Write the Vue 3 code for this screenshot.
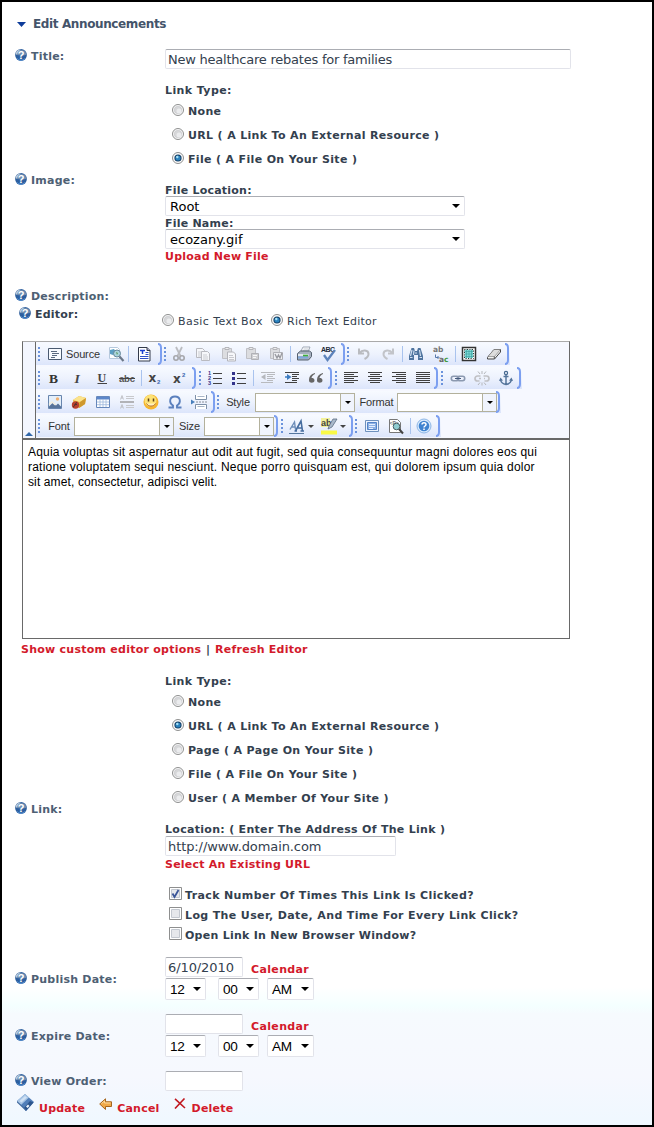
<script setup>
import { h } from 'vue'

const HelpIcon = () =>
  h('svg', {
    width: 12, height: 12, viewBox: '0 0 12 12', style: 'display:block;flex:none',
    innerHTML: `<circle cx="6" cy="6" r="5.900" fill="#2d5f9f"/><path d="M.3 5.800A5.800 5.800 0 0 1 11.700 5.800C9 7 4 6.600.3 5.800Z" fill="#6d8cb0"/><path d="M.6 5A5.500 5.500 0 0 1 6 .4C4 1.500 2.500 3 2 5.500Z" fill="#b9c9da"/><path d="M2 9.500C4 11.800 8 11.800 10 9.500" stroke="#5b95d6" fill="none"/><text x="6" y="9.800" text-anchor="middle" font-family="Liberation Sans" font-weight="bold" font-size="11" fill="#fff">?</text>`
  })

const RadioDot = (props) =>
  h('svg', {
    width: 12, height: 12, viewBox: '0 0 12 12', style: 'display:block;flex:none',
    innerHTML: `<circle cx="6" cy="6" r="5.500" fill="#fafafa" stroke="#8e8f8f"/>` +
      (props.on
        ? `<circle cx="6" cy="6" r="3.600" fill="#123a60"/><circle cx="6" cy="6" r="2.600" fill="#2b82bd"/><circle cx="5.300" cy="5" r="1.200" fill="#a5e0f5"/>`
        : `<circle cx="6" cy="6" r="3.800" fill="#d6d7d9" stroke="#c4c5c7" stroke-width=".6"/><circle cx="7" cy="7" r="2.500" fill="#ebecee"/>`)
  })
RadioDot.props = { on: Boolean }

const sheet = (x, y, c) => `<path d="M${x} ${y}h6l2 2v7h-8z" fill="#f6f7fa" stroke="${c}"/><path d="M${x + 1.5} ${y + 3.5}h4M${x + 1.5} ${y + 5.5}h5M${x + 1.5} ${y + 7.5}h5" stroke="${c}" stroke-width=".7"/>`
const clip = `<path d="M2.500 2.500h9v10h-9z" fill="#dcdde0" stroke="#c0c1c6"/><path d="M5 1.500h4v2h-4z" fill="#eee" stroke="#b4b5ba"/>`
const lines = (list, c = '#404040') => list.map(([x, y, w]) => `<path d="M${x} ${y + .5}h${w}" stroke="${c}"/>`).join('')
const serif = 'font-family="Liberation Serif" font-weight="bold"'
const sans = 'font-family="Liberation Sans" font-weight="bold"'
const wideSans = 'font-family="DejaVu Sans" font-weight="bold"'

const art = {
  source: `<path d="M1.500 2.500h13v11h-13z" fill="#f8fbff" stroke="#4a5a70"/><path d="M4 5.500h6M5 7.500h7M5 9.500h5M4 11.500h4" stroke="#5a6a80"/>`,
  preview: `<path d="M1.500 1.500h8l2 2v9h-10z" fill="#fff" stroke="#b5c8dc"/><path d="M2 4l4-1 2 3-3 3-3-1z" fill="#5b9fc4"/><circle cx="9" cy="7.500" r="3.500" fill="#a9d4dc" stroke="#66879b"/><path d="M8 6l2 1-1 2z" fill="#5c985c"/><path d="M11.500 10.500l4 4.500" stroke="#6b7788" stroke-width="2.200"/>`,
  template: `<path d="M2.500 1.500h8.500l3 3v10.500h-11.500z" fill="#fff" stroke="#333a4a"/><path d="M11 1.500v3h3" fill="#aac" stroke="#333a4a"/><path d="M4 4.500h5M6.500 4v4" stroke="#1b3fd0" stroke-width="1.500"/><path d="M9.500 6.500h3M9.500 8.500h3M4 10.500h8.500M4 12.500h8.500" stroke="#3050c8"/>`,
  cut: `<path d="M5 1l4.500 9M11 1l-4.500 9" stroke="#bbbcc0" stroke-width="1.800"/><circle cx="5" cy="12" r="2.200" fill="none" stroke="#a5a6aa" stroke-width="1.600"/><circle cx="11" cy="12" r="2.200" fill="none" stroke="#a5a6aa" stroke-width="1.600"/>`,
  copy: sheet(1.5, 2.5, '#b9bac0') + sheet(6.5, 5.5, '#b9bac0'),
  paste: clip + sheet(7.5, 6, '#b4b5bb'),
  pastetext: clip + `<path d="M7.500 7.500h7v6h-7z" fill="#cfd0d4" stroke="#b0b1b6"/><path d="M9 9.500h4M9 11.500h3" stroke="#f7f7f7"/>`,
  pasteword: clip + `<path d="M5.500 6.500h9v7h-9z" fill="#eeeff2" stroke="#b0b1b6"/><path d="M7 8l2 4 1.500-3 1.500 3 2-5" stroke="#999aa0" fill="none" stroke-width="1.300"/>`,
  print: `<path d="M5 5l2-4h7l-2 5z" fill="#fff" stroke="#8b95a5" stroke-width=".8"/><path d="M7.500 3h5M7 4.500h5" stroke="#98a5b5" stroke-width=".6"/><path d="M1.500 7.500l3-2.500h9l2 1.500v4l-3 3.500h-11z" fill="#a6b0bf" stroke="#55606f"/><path d="M2 8h10.500v2h-10.500z" fill="#e4e9ef"/><path d="M2 11.500h10" stroke="#7fa9dc" stroke-width="2"/><path d="M7 9.500h5" stroke="#3fae3b" stroke-width="1.600"/>`,
  spell: `<text x="0" y="5.800" font-family="Liberation Sans" font-size="7" fill="#222a38" textLength="14">ABC</text><path d="M3 9l3.500 5L14 4" stroke="#5d83bb" stroke-width="2.300" fill="none"/>`,
  undo: `<path d="M3 2.500v5h5M3.500 7C6 3.500 12.500 3.500 12.500 8c0 2.500-2 4-4 5" stroke="#b9bbc0" stroke-width="2" fill="none"/>`,
  redo: `<path d="M13 2.500v5h-5M12.500 7C10 3.500 3.500 3.500 3.500 8c0 2.500 2 4 4 5" stroke="#c2c4c9" stroke-width="2" fill="none"/>`,
  find: `<path d="M3.500 2h2.500l1 3h2l1-3h2.500l2.500 8v4h-5v-5h-4v5h-5v-4z" fill="#4f749f"/><path d="M4 4l-1.500 6M6 4.500L5.500 9M11.500 4l1 6M2 11.500h2.500M11.500 11.500h2.500M7 7h2" stroke="#cfdef0" stroke-width="1.200"/>`,
  replace: `<text x="0" y="6" ${wideSans} font-size="7.500" fill="#777">ab</text><text x="6" y="15.500" ${wideSans} font-size="7.500" fill="#666">a<tspan fill="#3c9a3c">c</tspan></text><path d="M2.500 8.500v3h3M4.500 10l1.500 1.500-1.500 1.500" stroke="#5577aa" fill="none"/>`,
  selectall: `<path d="M1.500 1.500h13v13h-13z" fill="#fff" stroke="#333" stroke-width="1.500"/><path d="M4 4h8v8h-8z" fill="#7fdcd8"/><path d="M5.500 3v10M8 3v10M10.500 3v10M3 5.500h10M3 8h10M3 10.500h10" stroke="#3a9a9c" stroke-width=".6"/><path d="M3.500 3.500h9v9h-9z" fill="none" stroke="#333" stroke-dasharray="1 1.500"/>`,
  eraser: `<path d="M1.500 11.500L8 3.500h6.500v2.500L8.500 13h-7z" fill="#f1f1f1" stroke="#444"/><path d="M8 3.500h6.500L8.500 10.500H2z" fill="#ddd" stroke="#777" stroke-width=".6"/><path d="M8.300 10.500V13" stroke="#555"/>`,
  bold: `<text x="3" y="12.500" ${serif} font-size="13.500" fill="#333">B</text>`,
  italic: `<text x="4.500" y="12.500" ${serif} font-style="italic" font-size="13.500" fill="#444">I</text>`,
  underline: `<text x="3.500" y="11.500" ${serif} font-size="12" fill="#444">U</text><path d="M3.500 13.500h9.500" stroke="#444"/>`,
  strike: `<text x="0" y="12" ${sans} font-size="9.500" fill="#555" textLength="16">abc</text><path d="M0 8.500h16" stroke="#444"/>`,
  sub: `<text x="1.500" y="11.500" ${wideSans} font-size="12" fill="#444">x</text><text x="10" y="14" ${sans} font-size="6" fill="#3a66b0">2</text>`,
  sup: `<text x="1" y="12.500" ${wideSans} font-size="12" fill="#444">x</text><text x="10" y="6.500" ${sans} font-size="6" fill="#3a66b0">2</text>`,
  num: lines([[6, 3, 9], [6, 8, 9], [6, 13, 9]]) + [5, 10, 15].map((y, i) => `<text x="1" y="${y}" ${sans} font-size="5.500" fill="#33338c">${i + 1}</text>`).join(''),
  bul: lines([[6, 3, 9], [6, 8, 9], [6, 13, 9]]) + [2, 7, 12].map(y => `<path d="M1 ${y}h3v3h-3z" fill="#33338c"/>`).join(''),
  outdent: lines([[1, 2, 14], [7, 4, 8], [7, 6, 6], [7, 8, 8], [7, 10, 6], [1, 12, 12]], '#b8babe') + `<path d="M5.500 4v6L1 7z" fill="#b5b8bd"/>`,
  indent: lines([[1, 2, 14], [8, 4, 7], [8, 6, 5], [8, 8, 7], [8, 10, 5], [1, 12, 12]]) + `<path d="M3 4v6l4.500-3z" fill="#3c7cc0"/><path d="M1 7h3" stroke="#3c7cc0" stroke-width="1.500"/>`,
  quote: `<path d="M7 3C3 4 1 6 1 10.500c0 3 5.500 3 5.500 0 0-2-1.500-2.500-3-2.500.3-2 1.500-3 3.500-4zM15 3c-4 1-6 3-6 7.500 0 3 5.500 3 5.500 0 0-2-1.500-2.500-3-2.500.3-2 1.500-3 3.500-4z" fill="#666"/>`,
  left: lines([[1, 2, 14], [1, 4, 10], [1, 6, 14], [1, 8, 10], [1, 10, 14], [1, 12, 10]]),
  center: lines([[1, 2, 14], [3, 4, 10], [1, 6, 14], [3, 8, 10], [1, 10, 14], [3, 12, 10]]),
  right: lines([[1, 2, 14], [5, 4, 10], [1, 6, 14], [5, 8, 10], [1, 10, 14], [5, 12, 10]]),
  justify: lines([[1, 2, 14], [1, 4, 14], [1, 6, 14], [1, 8, 14], [1, 10, 14], [1, 12, 14]]),
  chain: `<rect x="1.300" y="6.300" width="7.500" height="4.400" rx="2.200" fill="none" stroke="#8b99b0" stroke-width="1.600"/><rect x="7.200" y="6.300" width="7.500" height="4.400" rx="2.200" fill="none" stroke="#8b99b0" stroke-width="1.600"/><path d="M5 8.500h6" stroke="#45597b"/>`,
  unchain: `<path d="M6.500 6H3.500a2.500 2.500 0 0 0 0 5h2M9.500 6h3a2.500 2.500 0 0 1 0 5h-2M7 8.500h-2M11 8.500h-1" stroke="#c0c1c5" stroke-width="1.700" fill="none"/><path d="M8 1v3M4 1.500l2 2.500M12 1.500l-2 2.500M8 12.500v3M4 15l2-2.500M12 15l-2-2.500" stroke="#b5b7bb"/>`,
  anchor: `<circle cx="8" cy="3" r="1.600" fill="none" stroke="#45688f" stroke-width="1.200"/><path d="M8 4.500v10M5.500 6.500h5M2.500 9.500c.5 3 2.500 4.500 5.500 5 3-.5 5-2 5.500-5" stroke="#55759b" stroke-width="1.500" fill="none"/><path d="M1 11l1.500-3.500L5 10.500zM15 11l-1.500-3.500L11 10.500z" fill="#55759b"/>`,
  image: `<path d="M1.500 1.500h13v13h-13z" fill="#e4effa" stroke="#6785ad"/><path d="M2 12.500l4-4 3 3 2-2 3 3v1.500h-12z" fill="#58749a"/><path d="M2 10.500l3-2.500 3.500 3" stroke="#f4efdf" stroke-width="1.500" fill="none"/><circle cx="10.500" cy="5" r="1.700" fill="#f0b070"/>`,
  flash: `<path d="M2 6l6-4 7 2-1 6-6 4-5-3z" fill="#e8b93d"/><path d="M2 6l6-4 7 2-6 4z" fill="#fbe38d"/><path d="M9 8l6-4-1 6-6 4z" fill="#cf982d"/><circle cx="4.500" cy="11" r="3.700" fill="#b8402c"/><path d="M6 8.500c-2 0-1.500 4-4 4.500M3.500 10.500h2.500" stroke="#50302c" fill="none"/>`,
  table: `<path d="M1.500 2.500h13v11h-13z" fill="#fff" stroke="#6688bb"/><path d="M2 3h12v2.500h-12z" fill="#5c87ca"/><path d="M2 8h12M2 10.700h12M5 5v8M8 5v8M11 5v8" stroke="#9db7dc" stroke-width=".8"/>`,
  hr: `<path d="M1 8h14" stroke="#b2b3b7" stroke-width="2"/><path d="M7 2.500h8M7 4.500h8M7 11.500h8M7 13.500h8" stroke="#c8c9cc"/><path d="M1.500 5.500l1.500-4 1.500 4M2 4h2M1.500 14.500l1.500-4 1.500 4M2 13h2" stroke="#b8b9bd" stroke-width=".8" fill="none"/>`,
  smiley: `<circle cx="8" cy="8" r="7.500" fill="#f6b52e"/><circle cx="7.500" cy="6.800" r="6" fill="#fde275"/><path d="M5.500 4.500v3M10.500 4.500v3" stroke="#60401a" stroke-width="1.500"/><path d="M3.500 9.500c2 3.500 7 3.500 9 0" stroke="#b5651f" fill="#fff3c0" stroke-width="1"/>`,
  omega: `<path d="M1.500 13.500h4.500v-2C1.500 8.500 2.500 2.500 8 2.500s6.500 6 2 9v2h4.500" stroke="#5b80bd" stroke-width="1.900" fill="none"/>`,
  pagebreak: `<path d="M4.500 1v4.500h11V1M4.500 15v-4.500h11V15" stroke="#7d90a8" fill="#fff"/><path d="M6.500 2.500h7M6.500 12.500h7" stroke="#a7b5c8"/><path d="M5 8h11" stroke="#888e98" stroke-dasharray="2 1"/><path d="M0 5.500L4 8l-4 2.500z" fill="#4a80bc"/>`,
  textcolor: `<path d="M1 11.500L5.500 4l1 7.500M3 9h3.500" stroke="#6d8db8" stroke-width="1.400" fill="none"/><path d="M6.500 13L12 3l1.500 10M9 10h4M5.500 13h2.500M11.500 13h3.500" stroke="#456c9f" stroke-width="1.600" fill="none"/><path d="M0 15.500h15" stroke="#56779f"/>`,
  bgcolor: `<path d="M0 0h9v9h-9z" fill="#f2f19a"/><text x="0" y="7.500" ${sans} font-size="9" fill="#444">ab</text><path d="M8 8l4-7h4l-5 8-4 2z" fill="#a9b9cb" stroke="#5e6f83" stroke-width=".8"/><path d="M0 12.500h16v4h-16z" fill="#f9f946"/>`,
  blocks: `<path d="M1.500 2.500h13v11h-13z" fill="#edf4fe" stroke="#6e91bd"/><path d="M3.500 4.500h9v7h-9z" fill="#8eb2e4" stroke="#5484c8"/><path d="M5 6.500h6M5 8.500h6M5 10.500h4" stroke="#e3efff"/>`,
  tagpreview: `<path d="M1.500 1.500h8l3 3v10h-11z" fill="#fff" stroke="#777"/><text x="1.500" y="6.500" ${sans} font-size="5" fill="#777">&lt;P&gt;</text><circle cx="8.500" cy="8.500" r="3.300" fill="#91cdd0" stroke="#4b6064"/><path d="M11 11l4 4.500" stroke="#444" stroke-width="2"/>`,
  help: `<circle cx="8" cy="8" r="7" fill="#d8eafd" stroke="#8db6e6"/><circle cx="8" cy="8" r="5.300" fill="#3f83d0"/><path d="M6 6.500C6 4 10 4 10 6.500 10 8 8 8 8 9.500M8 10.500v1.500" stroke="#fff" stroke-width="1.500" fill="none"/>`
}

// Each entry: [kind, width, optional caption]
const toolbar = [
  [
    [['dots', 7], ['source', 62, 'Source'], ['preview', 21], ['sep', 4], ['template', 28], ['end', 5]],
    [['dots', 4], ['cut', 24], ['copy', 24], ['paste', 25], ['pastetext', 24], ['pasteword', 24], ['sep', 4], ['print', 24], ['spell', 25], ['end', 5]],
    [['dots', 5], ['undo', 25], ['redo', 24], ['sep', 4], ['find', 24], ['replace', 25], ['sep', 4], ['selectall', 24], ['eraser', 25], ['end', 4]]
  ],
  [
    [['dots', 6], ['bold', 24], ['italic', 24], ['underline', 24], ['strike', 25], ['sep', 4], ['sub', 24], ['sup', 25], ['end', 5]],
    [['dots', 6], ['num', 24], ['bul', 24], ['sep', 4], ['outdent', 25], ['indent', 24], ['quote', 24], ['end', 5]],
    [['dots', 6], ['left', 24], ['center', 24], ['right', 24], ['justify', 24], ['end', 4]],
    [['dots', 7], ['chain', 24], ['unchain', 24], ['anchor', 24], ['end', 4]]
  ],
  [
    [['dots', 7], ['image', 24], ['flash', 24], ['table', 24], ['hr', 24], ['smiley', 24], ['omega', 24], ['pagebreak', 24], ['end', 5]],
    [['dots', 4], ['label', 35, 'Style'], ['combo', 100], ['label', 42, 'Format'], ['combo', 100], ['end', 4]]
  ],
  [
    [['dots', 7], ['label', 31, 'Font'], ['combo', 100], ['label', 30, 'Size'], ['combo', 70], ['end', 5]],
    [['dots', 6], ['textcolor', 32, ''], ['bgcolor', 32, ''], ['end', 5]],
    [['dots', 5], ['blocks', 25], ['tagpreview', 24], ['sep', 4], ['help', 24], ['end', 5]]
  ]
]
const imageTypes = [['None'], ['URL ( A Link To An External Resource )'], ['File ( A File On Your Site )', true]]
const linkTypes = [['None'], ['URL ( A Link To An External Resource )', true], ['Page ( A Page On Your Site )'], ['File ( A File On Your Site )'], ['User ( A Member Of Your Site )']]
const checks = [['Track Number Of Times This Link Is Clicked?', true], ['Log The User, Date, And Time For Every Link Click?'], ['Open Link In New Browser Window?']]
</script>

<template>
  <main class="page">
    <header class="head">
      <svg width="9" height="5" viewBox="0 0 9 5"><path d="M0 0h9L4.500 5z" fill="#0d3c9a" /></svg>
      <h1>Edit Announcements</h1>
    </header>

    <section class="row title">
      <div class="label"><HelpIcon /><span>Title:</span></div>
      <div class="field wide">New healthcare rebates for families</div>
    </section>

    <section class="row">
      <div class="label at-image"><HelpIcon /><span>Image:</span></div>
      <div class="content">
        <div class="line type">Link Type:</div>
        <div v-for="[t, on] in imageTypes" :key="t" class="line option"><RadioDot :on="on" /><span>{{ t }}</span></div>
        <div class="line cap">File Location:</div>
        <div class="field select">Root<i class="arrow"></i></div>
        <div class="line cap2">File Name:</div>
        <div class="field select">ecozany.gif<i class="arrow"></i></div>
        <a class="line upload">Upload New File</a>
      </div>
    </section>

    <section class="label description"><HelpIcon /><span>Description:</span></section>
    <section class="row mode">
      <div class="label dark"><HelpIcon /><span>Editor:</span></div>
      <div class="modes">
        <RadioDot /><span class="basic">Basic Text Box</span><RadioDot on /><span class="rich">Rich Text Editor</span>
      </div>
    </section>

    <section class="editor">
      <div class="bar">
        <div class="collapse"><i></i></div>
        <div class="tools">
          <div v-for="(r, ri) in toolbar" :key="ri" class="tool-row">
            <div v-for="(g, gi) in r" :key="gi" class="group">
              <div v-for="([k, w, cap], i) in g" :key="i" class="cell" :class="k" :style="{ width: w + 'px' }">
                <template v-if="k === 'label'">{{ cap }}</template>
                <div v-else-if="k === 'combo'" class="combo-box"><b><i class="tiny"></i></b></div>
                <svg v-else-if="k === 'end'" width="5" height="22" viewBox="0 0 5 22"><path d="M0 1q3 0 3 4v12q0 4-3 4" fill="none" stroke="#7c9ff0" stroke-width="2" /></svg>
                <svg v-else-if="k === 'dots'" width="3" height="14" viewBox="0 0 3 14"><path d="M1 0v14" stroke="#6b93dc" stroke-width="2" stroke-dasharray="2 2" /></svg>
                <template v-else-if="art[k]">
                  <svg width="16" height="16" viewBox="0 0 16 16" overflow="visible" v-html="art[k]"></svg>
                  <span v-if="cap" class="caption">{{ cap }}</span>
                  <i v-else-if="cap === ''" class="tiny soft"></i>
                </template>
              </div>
            </div>
          </div>
        </div>
      </div>
      <div class="text">
        <p class="l1">Aquia voluptas sit aspernatur aut odit aut fugit, sed quia consequuntur magni dolores eos qui</p>
        <p class="l2">ratione voluptatem sequi nesciunt. Neque porro quisquam est, qui dolorem ipsum quia dolor</p>
        <p class="l3">sit amet, consectetur, adipisci velit.</p>
      </div>
    </section>
    <nav class="editor-links"><a>Show custom editor options</a><span>|</span><a>Refresh Editor</a></nav>

    <section class="row link-row">
      <div class="label at-link"><HelpIcon /><span>Link:</span></div>
      <div class="content">
        <div class="line type">Link Type:</div>
        <div v-for="[t, on] in linkTypes" :key="t" class="line option"><RadioDot :on="on" /><span>{{ t }}</span></div>
        <div class="line location">Location: ( Enter The Address Of The Link )</div>
        <div class="field url">http://www.domain.com</div>
        <a class="line existing">Select An Existing URL</a>
        <div v-for="[t, on] in checks" :key="t" class="line check">
          <svg width="13" height="13" viewBox="0 0 13 13">
            <path d="M.5.5h12v12H.5z" fill="#fff" stroke="#8e8f8f" /><path d="M2.500 2.500h8v8h-8z" fill="#e6e8ec" stroke="#c3c8d0" />
            <path v-if="on" d="M3.500 6.500l2 3.500 4-7" fill="none" stroke="#3b5698" stroke-width="1.800" />
          </svg>
          <span>{{ t }}</span>
        </div>
      </div>
    </section>

    <section v-for="(d, i) in [['Publish Date:', '6/10/2010'], ['Expire Date:', '']]" :key="i" class="row date">
      <div class="label"><HelpIcon /><span>{{ d[0] }}</span></div>
      <div class="content">
        <div class="date-line"><div class="field small">{{ d[1] }}</div><a>Calendar</a></div>
        <div class="times">
          <div class="field time">12<i class="arrow"></i></div>
          <div class="field time minute">00<i class="arrow"></i></div>
          <div class="field time ampm">AM<i class="arrow"></i></div>
        </div>
      </div>
    </section>

    <section class="row order">
      <div class="label"><HelpIcon /><span>View Order:</span></div>
      <div class="field small"></div>
    </section>

    <footer class="actions">
      <svg width="19" height="19" viewBox="0 0 19 19">
        <path d="M1 8L9 1l9 8-8 9z" fill="#527fb9" /><path d="M1 8L9 1l4 3.500-8 7.500z" fill="#a7c5e5" /><path d="M3.500 8L9 3l2 1.500-5.500 5z" fill="#cfe1f4" />
        <path d="M8 15l6-7 3.500 1.500L10 18z" fill="#2d568d" /><path d="M10 13.500l2-2 1.500 1.500-2 2z" fill="#edf4fb" /><path d="M1 8l9 8.500v1.500L1 9.500z" fill="#3f679b" />
      </svg>
      <a class="update">Update</a>
      <svg width="13" height="12" viewBox="0 0 13 12"><path d="M.7 6L6.500.8v3h6v4.700h-6v3z" fill="#f0a948" stroke="#a5661e" /><path d="M2.500 5.500l3-2.500v2h6" fill="none" stroke="#fbd99b" /></svg>
      <a class="cancel">Cancel</a>
      <svg width="12" height="11" viewBox="0 0 12 11"><path d="M1 .8L11 10M10.500.5L1 10.500" stroke="#c01820" stroke-width="1.600" fill="none" /></svg>
      <a class="delete">Delete</a>
    </footer>
  </main>
</template>

<style>
body { margin: 0; }
</style>

<style scoped>
.page {
  box-sizing: border-box; width: 654px; height: 1127px; overflow: hidden;
  border: 2px solid #000;
  background: linear-gradient(#fff 0, #fff 985px, #f4ffff 1004px, #f6fafe 1012px, #f6f8fe 1075px, #eff8ff 1123px);
  font: bold 11px/14px Verdana, "DejaVu Sans", sans-serif; letter-spacing: .22px; color: #33404e;
}
a { color: #d31a2b; }
svg { display: block; flex: none; letter-spacing: 0; }
.head { display: flex; align-items: center; height: 16px; margin: 14px 0 0 15px; }
.head h1 { margin: 0 0 0 7px; font-size: 12px; letter-spacing: -.38px; color: #44546a; }
.row { display: flex; align-items: flex-start; }
.label { box-sizing: border-box; flex: none; display: flex; align-items: center; width: 163px; height: 20px; padding-left: 13px; color: #4e6074; }
.label span { margin-left: 4px; padding-top: 1px; }
.label svg { margin-bottom: 3px; }
.label.dark { color: #33404e; padding-left: 17px; height: 18px; }
.field {
  box-sizing: border-box; height: 20px; border: 1px solid #e2e3ea; border-top-color: #abadb3; border-radius: 2px;
  background: #fff; padding-left: 2px; font-weight: normal; font-size: 13px; line-height: 19px; letter-spacing: -.09px; white-space: nowrap;
}
.title { height: 48px; }
.title .label { margin-top: 14px; }
.wide { width: 406px; margin-top: 17px; letter-spacing: -.23px; }
.at-image { margin-top: 90px; }
.content { flex: none; }
.line { box-sizing: border-box; display: flex; align-items: center; padding-top: 2px; white-space: nowrap; }
.type { height: 19px; letter-spacing: .4px; }
.option { height: 24px; padding-left: 7px; letter-spacing: .34px; }
.option span { margin-left: 4px; }
.option svg { margin-bottom: 4px; }
.cap { height: 13px; margin-top: 12px; }
.cap2 { height: 13px; }
.upload { height: 14px; }
.select { display: flex; align-items: center; justify-content: space-between; width: 300px; padding: 0 4px 0 4px; letter-spacing: 0; color: #000; }
.arrow { width: 0; height: 0; border: 4px solid transparent; border-top-color: #000; border-bottom: 0; }
.description { margin-top: 24px; height: 18px; }
.mode { height: 36px; }
.modes { display: flex; align-items: center; height: 16px; margin-top: 9px; margin-left: -3px; font-weight: normal; white-space: nowrap; }
.modes svg { margin-bottom: 4px; }
.modes span { margin-left: 4px; }
.modes .basic { width: 93px; letter-spacing: .43px; }
.modes .rich { letter-spacing: .27px; }

.editor { box-sizing: border-box; width: 548px; height: 298px; margin-left: 20px; border: 1px solid #696969; border-top-color: #aaa; background: #fff; }
.bar { display: flex; height: 96px; border-bottom: 2px solid #696969; background: #f6f8ff; }
.collapse { display: flex; align-items: flex-end; justify-content: center; width: 12px; border-right: 1px solid #696969; background: #f3f6fe; }
.collapse i { margin-bottom: 2px; border: 4px solid transparent; border-bottom-color: #3268aa; border-top: 0; }
.tool-row { display: flex; height: 24px; }
.group { display: flex; height: 22px; margin-top: 1px; background: linear-gradient(#f7faff, #edf2fd 50%, #dce5fb); }
.cell { flex: none; display: flex; align-items: center; justify-content: center; height: 22px; }
.sep::before { content: ""; width: 1px; height: 16px; background: #a9c3ee; }
.end { justify-content: flex-end; }
.source { justify-content: flex-start; box-sizing: border-box; padding-left: 4px; }
.caption { margin-left: 3px; }
.caption, .label.cell { font: 11px "Liberation Sans", Arial, sans-serif; letter-spacing: -.15px; color: #333; }
.label.cell { display: flex; height: 22px; padding-left: 1px; }
.combo-box { box-sizing: border-box; width: 100%; height: 19px; border: 1px solid #b3b19c; background: #fff; display: flex; justify-content: flex-end; }
.combo-box b { display: flex; align-items: center; justify-content: center; width: 13px; border-left: 1px solid #b3b19c; background: #f0f4fd; }
.tiny { border: 3px solid transparent; border-top-color: #000; border-bottom: 0; }
.tiny.soft { margin-left: 3px; border-top-color: #444; }
.text { padding: 5px 5px 0; font: 12px/15px Arial, "Liberation Sans", sans-serif; color: #000; white-space: nowrap; }
.text p { margin: 0; }
.l1 { letter-spacing: .18px; }
.l2 { letter-spacing: .215px; }
.l3 { letter-spacing: .12px; }
.editor-links { display: flex; align-items: center; height: 20px; padding-top: 1px; margin: 0 0 -1px 19px; letter-spacing: .25px; white-space: nowrap; }
.editor-links span { margin: 0 4.700px; }

.link-row { margin-top: 12px; }
.at-link { margin-top: 128px; }
.location { height: 14px; margin-top: 12px; letter-spacing: .3px; }
.url { width: 231px; }
.existing { height: 16px; margin-bottom: 13px; }
.check { height: 20px; padding-left: 4px; letter-spacing: .37px; }
.check:last-child { letter-spacing: .26px; }
.check span { margin-left: 3px; }
.check svg { margin-bottom: 5px; }

.date { height: 43px; margin-top: 12px; }
.date + .date { margin-top: 14px; }
.date .label { margin-top: 12px; }
.date-line { display: flex; height: 21px; }
.date-line a { margin: 6px 0 0 8px; letter-spacing: .36px; }
.small { width: 78px; }
.times { display: flex; }
.time { display: flex; align-items: center; justify-content: space-between; width: 41px; height: 22px; padding: 0 4px; font: 13.600px Arial, "Liberation Sans", sans-serif; letter-spacing: -.3px; color: #000; }
.minute { margin-left: 12px; }
.ampm { width: 47px; margin-left: 8px; }
.order { height: 20px; margin-top: 14px; }

.actions { display: flex; align-items: flex-start; height: 30px; padding: 2px 0 0 14px; }
.actions a { margin-top: 9px; }
.actions svg + .update { margin-left: 4px; }
.actions .update + svg { margin: 5px 0 0 14px; }
.actions .cancel { margin-left: 5px; }
.actions .cancel + svg { margin: 5px 0 0 14px; }
.actions .delete { margin-left: 6px; }
</style>
